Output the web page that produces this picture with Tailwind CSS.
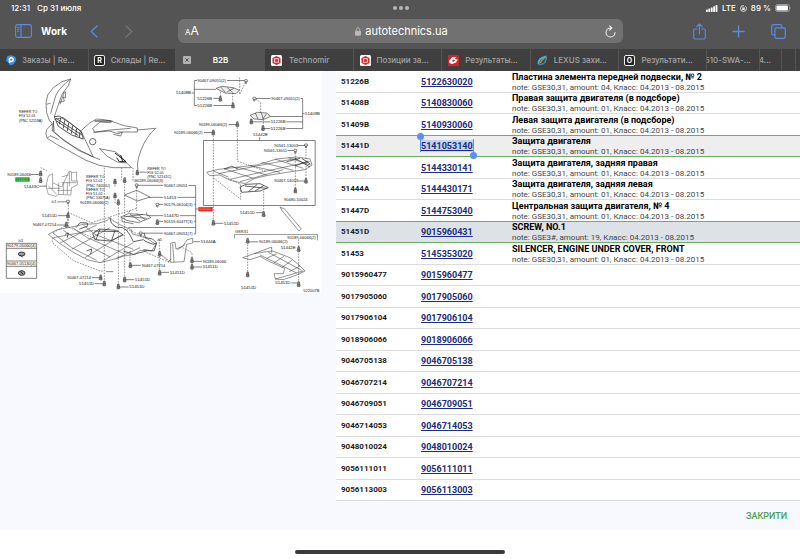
<!DOCTYPE html>
<html lang="ru">
<head>
    <meta charset="UTF-8">
    <meta name="viewport" content="width=device-width, initial-scale=1.0">
    <title>B2B</title>
    <script src="https://cdn.jsdelivr.net/npm/@tailwindcss/browser@4"></script>
</head>
<body class="min-h-screen flex flex-col bg-white font-['Roboto',sans-serif] text-[#212121] overflow-x-hidden">

    <!-- Browser chrome -->
    <header class="bg-[#545454] text-white font-['Inter',sans-serif]">
        <div class="grid grid-cols-3 items-center h-4 pl-[11px] pr-2 text-[8px] leading-4 font-medium">
            <div class="flex gap-[7px]"><span>12:31</span><span>Ср 31 июля</span></div>
            <div class="flex justify-center gap-[2px]">
                <i class="size-1 rounded-full bg-[#b5b5b5]"></i>
                <i class="size-1 rounded-full bg-[#b5b5b5]"></i>
                <i class="size-1 rounded-full bg-[#b5b5b5]"></i>
            </div>
            <div class="flex justify-end items-center gap-[4px]">
                <svg class="w-3 h-[7px]" viewBox="0 0 12 7" fill="#fff"><rect y="4.5" width="1.8" height="2.5" rx=".4"/><rect x="2.4" y="3.5" width="1.8" height="3.5" rx=".4"/><rect x="4.8" y="2.5" width="1.8" height="4.5" rx=".4"/><rect x="7.2" y="1.3" width="1.8" height="5.7" rx=".4"/><rect x="9.6" width="1.8" height="7" rx=".4"/></svg>
                <span>LTE</span>
                <svg class="size-[7px]" viewBox="0 0 8 8" fill="none" stroke="#fff" stroke-width=".9"><circle cx="4" cy="4" r="3.4" stroke-dasharray="16 2"/><rect x="2.6" y="3.7" width="2.8" height="2" fill="#fff" stroke="none"/><path d="M3.1 3.8V3a.9.9 0 0 1 1.8 0v.8" stroke-width=".6"/></svg>
                <span>89 %</span>
                <svg class="w-[17px] h-2" viewBox="0 0 17 8"><rect x=".5" y=".5" width="14" height="7" rx="2" fill="none" stroke="#aaa" stroke-width=".8"/><rect x="1.4" y="1.4" width="11.6" height="5.2" rx="1.2" fill="#fff"/><path d="M15.5 2.8q1 1.2 0 2.4z" fill="#aaa"/></svg>
            </div>
        </div>

        <div class="flex items-center h-[33px] pl-[15px] pr-[14px] pb-[3px]">
            <div class="flex items-center w-[163px]">
                <button aria-label="Sidebar"><svg class="w-[17px] h-[14px] block" viewBox="0 0 17 14" fill="none" stroke="#5a8ae6" stroke-width="1.1"><rect x=".6" y=".6" width="15.8" height="12.8" rx="1.8"/><path d="M6 .6v12.8M2 3.2h2.4M2 5.2h2.4M2 7.2h2.4"/></svg></button>
                <button class="ml-[9px] text-[10px] font-bold w-[25px] text-left">Work</button>
                <button class="ml-[24px]" aria-label="Back"><svg class="w-2 h-[13px] block" viewBox="0 0 8 13" fill="none" stroke="#5a8ae6" stroke-width="1.3" stroke-linecap="round" stroke-linejoin="round"><path d="M7 1 1.2 6.5 7 12"/></svg></button>
                <button class="ml-[27px]" aria-label="Forward"><svg class="w-2 h-[13px] block" viewBox="0 0 8 13" fill="none" stroke="#757575" stroke-width="1.3" stroke-linecap="round" stroke-linejoin="round"><path d="m1 1 5.8 5.5L1 12"/></svg></button>
            </div>
            <div class="flex-1 flex items-center h-6 rounded-[6px] bg-[#717171] px-[7px]">
                <button class="flex items-baseline w-5 leading-4" aria-label="Text size"><span class="text-[8px]">A</span><span class="text-[12px]">A</span></button>
                <div class="flex-1 flex items-center justify-center gap-1">
                    <svg class="w-[6px] h-[9px]" viewBox="0 0 6 9"><rect y="3.8" width="6" height="5" rx="1" fill="#b9b9b9"/><path d="M1.2 4V2.5a1.8 1.8 0 0 1 3.6 0V4" fill="none" stroke="#b9b9b9" stroke-width=".9"/></svg>
                    <input type="text" aria-label="Address" value="autotechnics.ua" class="field-sizing-content text-[11px] leading-4 bg-transparent outline-none">
                </div>
                <button class="w-[18px] flex justify-end" aria-label="Reload"><svg class="w-[11px] h-[13px]" viewBox="0 0 11 13" fill="none" stroke="#eee" stroke-width="1.1" stroke-linecap="round" stroke-linejoin="round"><path d="M5.5 3a4.5 4.5 0 1 0 4.5 4.5M4.6 .8 6.8 3 4.6 5.2"/></svg></button>
            </div>
            <div class="flex items-center justify-end gap-[26px] w-[163px]">
                <button aria-label="Share"><svg class="w-[13px] h-[17px] block" viewBox="0 0 13 17" fill="none" stroke="#5a8ae6" stroke-width="1.1" stroke-linecap="round" stroke-linejoin="round"><path d="M4.3 6H2Q.7 6 .7 7.3v7.4Q.7 16 2 16h9q1.3 0 1.3-1.3V7.3Q12.3 6 11 6H8.7M6.5 11V1M3.7 3.6 6.5.8l2.8 2.8"/></svg></button>
                <button aria-label="New tab"><svg class="size-[13px] block" viewBox="0 0 13 13" stroke="#5a8ae6" stroke-width="1.4" stroke-linecap="round"><path d="M6.5 1v11M1 6.5h11"/></svg></button>
                <button aria-label="Tabs"><svg class="size-[15px] block" viewBox="0 0 15 15" fill="none" stroke="#5a8ae6" stroke-width="1.2"><path d="M3.8 10.8H2.3Q.7 10.8.7 9.2v-7Q.7.7 2.2.7h7q1.6 0 1.6 1.5v1.6"/><rect x="3.9" y="3.9" width="10.4" height="10.4" rx="1.6"/></svg></button>
            </div>
        </div>

        <nav class="flex h-[22px] bg-[#3f3f3f] text-[8px] leading-[22px] font-medium text-[#a5a5a5] whitespace-nowrap">
            <a href="#" class="flex-1 min-w-0 flex items-center gap-[6px] pl-[6px] border-r border-[#555]">
                <svg class="size-[10px] shrink-0" viewBox="0 0 10 10"><path d="M1 1.5Q5-.8 8.5 1.5T8.5 8 3.5 9.5L2.5 7.5 0 6Z" fill="#3d8fda"/><path d="M3.5 8V5.2A1.9 1.9 0 1 1 5.5 6.5H4" fill="none" stroke="#fff" stroke-width="1.5"/></svg>
                <span>Заказы | Re...</span>
            </a>
            <a href="#" class="flex-1 min-w-0 flex items-center gap-[6px] pl-[5px] border-r border-[#555]">
                <svg class="size-[11px] shrink-0" viewBox="0 0 11 11"><rect x=".5" y=".5" width="10" height="10" rx="1.5" fill="#222" stroke="#eee"/><text x="5.5" y="8" text-anchor="middle" font-size="7" font-weight="700" fill="#fff">R</text></svg>
                <span>Склады | Re...</span>
            </a>
            <a href="#" class="flex-1 min-w-0 flex items-center pl-[7px] bg-[#545454] text-white font-semibold">
                <svg class="size-2 shrink-0" viewBox="0 0 8 8"><rect width="8" height="8" rx="1" fill="#b5b5b5"/><path d="m2.3 2.3 3.4 3.4m0-3.4L2.3 5.7" stroke="#444" stroke-width=".9"/></svg>
                <span class="flex-1 text-center pr-[15px]">B2B</span>
            </a>
            <a href="#" class="flex-1 min-w-0 flex items-center gap-[7px] pl-[6px] border-r border-[#555]">
                <svg class="size-[11px] shrink-0" viewBox="0 0 11 11"><rect width="11" height="11" rx="1.5" fill="#fff"/><path d="m5.5 1 4 2v5l-4 2-4-2V3z" fill="#d92828"/><rect x="3.5" y="3.8" width="4" height="3.4" fill="none" stroke="#fff" stroke-width=".8"/></svg>
                <span>Technomir</span>
            </a>
            <a href="#" class="flex-1 min-w-0 flex items-center gap-[6px] pl-[6px] border-r border-[#555]">
                <svg class="size-[11px] shrink-0" viewBox="0 0 11 11"><rect width="11" height="11" rx="1.5" fill="#fff"/><path d="m5.5 1 4 2v5l-4 2-4-2V3z" fill="#d92828"/><rect x="3.5" y="3.8" width="4" height="3.4" fill="none" stroke="#fff" stroke-width=".8"/></svg>
                <span>Позиции за...</span>
            </a>
            <a href="#" class="flex-1 min-w-0 flex items-center gap-[6px] pl-[6px] border-r border-[#555]">
                <svg class="size-[11px] shrink-0" viewBox="0 0 11 11"><rect width="11" height="11" fill="#cf2430"/><path d="M1 6 4 2.2 8.5 2 6.5 4 10 4.5 8 7.5 4 9 1.5 8z" fill="#fff"/><path d="M4 6.5 5 4.5 7 5 6 6.8z" fill="#cf2430"/></svg>
                <span>Результаты...</span>
            </a>
            <a href="#" class="flex-1 min-w-0 flex items-center gap-[6px] pl-[6px] border-r border-[#555]">
                <svg class="size-[11px] shrink-0" viewBox="0 0 11 11" fill="none"><path d="M1.5 9Q1 3 9.5 1.5" stroke="#47b5d4" stroke-width="1.8"/><path d="M1.5 9.5Q5 10 8 7.5L9.500 2" stroke="#418bb8" stroke-width="1.500"/><path d="M3.500 8Q4 5 7.500 3.500" stroke="#d68a3c" stroke-width="1.200"/></svg>
                <span>LEXUS захи...</span>
            </a>
            <a href="#" class="flex-1 min-w-0 flex items-center gap-[6px] pl-[5px] border-r border-[#555]">
                <svg class="size-[11px] shrink-0" viewBox="0 0 11 11"><rect x=".5" y=".5" width="10" height="10" rx="1.5" fill="#222" stroke="#eee"/><text x="5.5" y="8" text-anchor="middle" font-size="7" font-weight="700" fill="#fff">O</text></svg>
                <span>Результати...</span>
            </a>
            <a href="#" class="w-[53px] flex justify-end overflow-hidden pr-[8px] border-r border-[#555]"><span>510-SWA-...</span></a>
            <a href="#" class="w-[22px] flex justify-end overflow-hidden pr-[10px] border-r border-[#555]"><span>4...</span></a>
            <a href="#" class="w-[14px] border-r border-[#555]" aria-label="Tab"></a>
            <a href="#" class="w-[4px]" aria-label="Tab"></a>
        </nav>
    </header>

    <main class="bg-[#f8f8ff]">
        <div class="flex items-start">
            <!-- Exploded view -->
            <section class="w-[42%] pr-[14px]">
                <svg class="w-full h-auto block bg-white" viewBox="0 0 966 666" font-family="'Liberation Sans',sans-serif" font-size="12" fill="#111" stroke-linejoin="round">
                    <defs>
                        <g id="bolt"><path d="M-2-8h4l2 9h-8z" fill="#888" stroke="#333" stroke-width="1.500"/><ellipse cy="4" rx="5" ry="3" fill="#888" stroke="#333" stroke-width="1.500"/></g>
                        <g id="nut"><ellipse rx="5" ry="3.500" fill="#eee" stroke="#222" stroke-width="1.600"/><path d="M-2 3v5h4V3" fill="none" stroke="#222" stroke-width="1.500"/></g>
                    </defs>

                    <!-- bumper -->
                    <g fill="none" stroke="#333" stroke-width="1.800">
                        <path d="M212 24 186 32 160 50 143 72 138 96 140 125 148 148 157 158 140 176Q134 188 142 202L170 220 222 248 258 268Q300 288 340 290H395L380 276M212 24 205 44 187 68 172 110 163 137M212 24Q180 48 168 72L157 108 152 128M189 66 196 62 197 80 190 78 193 90 178 94M192 66 180 100M140 100 152 96"/>
                        <path d="M240 182 270 155 290 144 312 146 338 151 330 155 300 153 278 172 284 184 330 180 352 188 367 184 362 195 340 190M338 152 372 164 412 171V183H352M280 184 320 178 392 172M412 177 467 172Q440 195 424 235T414 296"/>
                        <path d="M157 158V180L180 198 235 238 280 258M163 145 190 140 244 182 280 258 240 238 190 208 158 178M280 258 300 266M298 233 345 242 362 255 380 276 352 273 322 256ZM142 202 150 194 176 206"/>
                        <path d="M163 137 178 135 210 156 244 182 250 204 215 192 175 166ZM168 142 246 192M170 150 235 194M160 150 162 180M182 140 178 160M194 148 190 172M206 156 202 180M218 164 214 188M230 172 227 194M240 182 238 200" stroke="#333" stroke-width="2.500"/>
                        <path d="M345 246 378 272 358 272 350 260M362 252 368 272M284 150h50" stroke="#222" stroke-width="3"/>
                        <circle cx="278" cy="212" r="9.500" stroke-width="2.200"/>
                    </g>

                    <!-- under cover, front -->
                    <g fill="none" stroke="#444" stroke-width="1.700">
                        <path d="M145 490 172 476 225 466 250 460 292 458 322 448 330 440 338 448 362 462 394 476 396 488 440 502 468 520 455 540 420 538 405 550 372 555 340 565 300 575 262 566 222 545 180 518ZM158 485 215 530 290 568M190 478 240 510 330 558M218 470 262 500 372 548M250 462 285 490 400 535M180 516 290 462M215 535 330 470M255 560 368 490M305 572 400 515M350 562 420 530M160 500 280 478"/>
                        <path d="M278 488 298 474 350 478 370 492 330 510 285 506ZM282 480 355 482M300 474 288 506M345 478 335 508M330 440 334 456 348 468 368 470 380 478 390 492 400 512 430 506 438 512 460 520 470 516 462 540 430 536M370 540 400 550 440 540M228 470 240 455 262 456 262 466 238 474M260 540 275 534 272 550M195 490 205 486 202 500M432 486 436 500 458 504 470 516" stroke="#333" stroke-width="2.300"/>
                        <path d="M157 500V515L222 570 300 600H312M205 402V468L300 510M313 290V640M355 400V645M374 330V620M365 290V325M399 290V330H412M345 325V350M345 375V400M204 424 275 455 410 412M410 340V420M390 540V585M122 290 145 302M478 505V610M478 548 510 575M440 545 510 575M160 485 200 462 205 440M380 475 440 500" stroke-dasharray="5 3.500"/>
                    </g>

                    <!-- bracket 51443C -->
                    <path d="M145 315 158 308V335L185 348 208 300 214 302 215 330H232V342L215 350 212 372 175 370 168 376 145 370 138 345ZM176 335V370M190 335V370M202 335V370M172 358H214M185 335H230M208 302V345M145 345 170 370M158 335V355M142 352H180M185 318 205 312M215 305 230 303V330" fill="none" stroke="#666" stroke-width="1.700"/>

                    <!-- plates -->
                    <g fill="none" stroke="#333" stroke-width="1.800">
                        <path d="M373 372 410 358 450 378 412 390Z"/>
                        <path d="M362 438 385 428 445 432 452 440 415 455 380 448ZM378 436 440 442M390 430 420 450M410 428 436 446M370 438 430 430M366 440V452L400 458M385 425l5-6M440 430v-6" stroke-width="2.200" stroke="#555"/>
                    </g>

                    <!-- guards -->
                    <g fill="#eee" stroke="#444" stroke-width="2">
                        <path d="M648 52 665 46 700 50 718 58 708 68 675 66ZM662 48l14 16m6-14 16 14m4-12-20 10M750 133 772 124 800 126 812 136 790 146 762 144ZM766 126l8 18m10-18 6 18m10-16-12 16"/>
                    </g>

                    <!-- engine under cover 51442E -->
                    <g fill="none" stroke="#444" stroke-width="1.700">
                        <path d="M620 304 655 295 700 290 770 282 830 264 890 258 930 264 936 282 915 296 860 304 800 314 765 322 735 338 690 328 660 312 630 314ZM640 300 685 318M672 293 760 322M710 288 800 312M750 284 840 304M785 274 880 298M825 264 910 292M865 260 930 282M655 308 770 285 890 262M690 325 800 300 930 272M720 332 850 296"/>
                        <path d="M720 348 738 340 780 338 805 350 780 360 725 364ZM735 345 800 352M745 362 772 340M765 360 792 343M672 294 695 286 715 294M860 272 900 262M885 262 930 288M905 262 932 280M885 285 925 270" stroke="#333" stroke-width="2.300"/>
                        <path d="M640 185V455M712 160V270L800 302M640 320 722 385V340L680 320M886 245V355M918 225V330M791 360V425M719 20V70L738 30M768 85 782 95V125M662 62V84M698 66V104M790 145V168" stroke-dasharray="5 3.500"/>
                        <path d="M610.500 208.500H945.500V403.500H610.500Z" stroke="#222"/>
                        <path d="m843 410 10 3 51 61-7 6-51-61-6-11z"/>
                    </g>

                    <!-- lower right cover and bracket 51444A -->
                    <g fill="none" stroke="#444" stroke-width="1.700">
                        <path d="M728 560 762 548 800 542 818 540 870 560 895 580 915 600 890 612 850 626 826 624 822 608 850 608 854 592 805 570 780 556 750 566ZM780 552 890 606M805 544 905 598M800 562 830 548M822 575 852 556M845 590 876 568M868 602 900 585M826 624 910 600M762 548 815 528V545"/>
                        <path d="M512 516 525 514 528 534 548 526 562 506 578 502V516L560 520 552 572 512 574ZM518 518 522 574M532 536 556 520M505 572 512 565"/>
                        <path d="M743 512V610M896 505V640M548 530 576 545V600M480 548 512 573" stroke-dasharray="5 3.500"/>
                        <path d="M703.500 502V490.500H952.500V508" stroke="#555"/>
                    </g>

                    <!-- leader lines -->
                    <path fill="none" stroke="#333" stroke-width="1.800" d="M591 28.500H583V103.500H591M575 66H583M583 55H648M681 28.500H735M640 82H660M640 103.500H698M768 82.500H812M902 82.500H908V172.500M908 128H914M812 136.500H908M755 152.500H811M859 152.500H908M790 172.500H811M859 172.500H908M779 198V208M686 160.500H710M612 184.500H638M894 223.500H916M863 238.500H884M92 310.500H118M118 345.500H140M440 303.500H418M172 392.500H200M174 434H202M170 462H198M410 343H490M448 379H490M470 400H490M440 434H490M472 451H490M425 486.500H490M385 469.500H587M566 343.500H587V488.500H582M587 414H596M532 379H587M582 400H587M540 434H587M582 451H587M392 583H423M374 626H403M355 648H386M276 620H298M285 638H310M479 604H507M642 457H670M768 425H790M580 512H600M578 571H606M578 588H606M745 512.500H775M874 636H894M894 330H916M318 602H340"/>

                    <!-- fasteners -->
                    <g>
                        <use href="#bolt" x="122" y="308"/><use href="#bolt" x="122" y="328"/>
                        <use href="#nut" x="204" y="391"/><use href="#bolt" x="204" y="434"/><use href="#bolt" x="199" y="462"/>
                        <use href="#bolt" x="412" y="305"/><use href="#bolt" x="345" y="332"/><use href="#bolt" x="374" y="328"/><use href="#bolt" x="345" y="374"/><use href="#nut" x="410" y="342"/>
                        <use href="#bolt" x="355" y="394"/><use href="#nut" x="472" y="400"/><use href="#bolt" x="472" y="454"/><use href="#nut" x="422" y="486"/>
                        <use href="#bolt" x="391" y="583"/><use href="#bolt" x="374" y="626"/><use href="#bolt" x="355" y="647"/><use href="#bolt" x="302" y="620"/><use href="#bolt" x="313" y="638"/>
                        <use href="#bolt" x="479" y="549"/><use href="#bolt" x="479" y="606"/>
                        <use href="#nut" x="738" y="29"/><use href="#bolt" x="661" y="84"/><use href="#bolt" x="699" y="104"/><use href="#nut" x="763" y="82"/>
                        <use href="#bolt" x="754" y="152"/><use href="#bolt" x="789" y="172"/>
                        <use href="#bolt" x="712" y="160"/><use href="#bolt" x="640" y="185"/><use href="#nut" x="918" y="222"/><use href="#nut" x="886" y="238"/>
                        <use href="#bolt" x="918" y="330"/><use href="#bolt" x="886" y="359"/><use href="#bolt" x="791" y="430"/><use href="#bolt" x="640" y="456"/>
                        <use href="#bolt" x="576" y="568"/><use href="#bolt" x="576" y="588"/><use href="#bolt" x="743" y="510"/><use href="#bolt" x="743" y="611"/>
                        <use href="#bolt" x="896" y="535"/><use href="#bolt" x="896" y="640"/>
                    </g>

                    <!-- clip box -->
                    <path d="M19 517h91v105H19zM19 532h91M19 570h91M19 586h91" fill="none" stroke="#444" stroke-width="2"/>
                    <g fill="#999" stroke="#222" stroke-width="2.500"><ellipse cx="65" cy="549" rx="10" ry="6"/><ellipse cx="65" cy="606" rx="10" ry="7"/><path d="m60 553 8 5M60 601l9 8"/></g>

                    <!-- figure references -->
                    <g font-size="11">
                        <text x="57" y="126">REFER TO</text><text x="57" y="139">FIG 52-01</text><text x="57" y="152">(PNC 52119A)</text>
                        <text x="442" y="296">REFER TO</text><text x="442" y="308">FIG 52-01</text><text x="442" y="320">(PNC 52161C)</text>
                        <text x="258" y="322">REFER TO</text><text x="258" y="334">FIG 52-01</text><text x="258" y="347">(PNC 74051U)</text>
                        <text x="258" y="360">REFER TO</text><text x="258" y="372">FIG 51-02</text><text x="258" y="385">(PNC 53075A)</text>
                    </g>

                    <!-- standard parts -->
                    <text x="22" y="314">90189-06066</text><text x="154" y="396">※1</text><text x="54" y="512">※1</text><text x="470" y="509">※1</text>
                    <text x="98" y="466">90467-07214</text><text x="240" y="398">90189-06066(2)</text><text x="404" y="333">90189-06066(3)</text>
                    <text x="492" y="347">90467-09051</text><text x="492" y="404">90179-06104(3)</text><text x="492" y="455">90159-60477(3)</text><text x="492" y="491">90467-09051(7)</text>
                    <text x="21" y="529">90179-05060(4)</text><text x="21" y="583">90467-05130(4)</text>
                    <text x="425" y="587">90467-07214</text><text x="202" y="624">90467-07214</text>
                    <text x="592" y="32">90467-09051(2)</text><text x="814" y="86">90467-09051(2)</text>
                    <text x="596" y="164">90189-06066(2)</text><text x="522" y="188">90189-06066(2)</text>
                    <text x="823" y="227">90561-13003</text><text x="791" y="242">90561-13011</text><text x="823" y="334">90467-14053</text><text x="852" y="391">90480-10024</text>
                    <text x="608" y="575">90189-06066</text><text x="705" y="487">GSR31</text><text x="777" y="516">90189-06066(2)</text><text x="862" y="503">90189-06066(2)</text><text x="910" y="662">522007B</text>

                    <!-- catalogue parts -->
                    <g font-size="13">
                        <text x="72" y="350">51443C</text><text x="126" y="438">51451D</text><text x="492" y="383">51453</text><text x="492" y="438">51447D</text>
                        <text x="509" y="608">51451D</text><text x="405" y="630">51451D</text><text x="388" y="652">51451D</text><text x="237" y="642">51451D</text>
                        <text x="528" y="70">51408B</text><text x="592" y="86">51226B</text><text x="592" y="107">51226B</text>
                        <text x="915" y="132">51409B</text><text x="812" y="156">51226B</text><text x="812" y="176">51226B</text><text x="759" y="196">51442E</text>
                        <text x="720" y="429">51451D</text><text x="672" y="461">51451D</text><text x="602" y="516">51444A</text><text x="608" y="592">51451D</text>
                        <text x="842" y="534">51442E</text><text x="723" y="653">51451D</text><text x="826" y="640">51451D</text>
                    </g>
                    <rect x="46" y="319" width="43" height="13" fill="#159a15"/><text x="49" y="329" font-size="10" fill="#9ee09e">51441D</text>
                    <rect x="595" y="408" width="43" height="13" fill="#ee2a20"/><text x="598" y="418" font-size="10" fill="#ff9a92">51451D</text>
                </svg>
            </section>

            <!-- Parts list -->
            <section class="flex-1 bg-white">
                <table class="w-full table-fixed border-separate border-spacing-0">
                    <colgroup><col class="w-[85px]"><col class="w-[91px]"><col></colgroup>
                    <tbody id="parts"></tbody>
                </table>
            </section>
        </div>
        <div class="flex justify-end items-center h-[29px] pr-[13px]">
            <button class="text-[9px] leading-4 font-medium text-[#4c9f4a]">ЗАКРИТИ</button>
        </div>
    </main>

    <footer class="flex-1 flex justify-center items-end pb-[5px]">
        <div class="w-[210px] h-1 rounded-full bg-[#3a3a3c]"></div>
    </footer>

    <script>
        const gray = 'border-[#dcdcdc]';
        const green = 'border-[#6fac66]';

        // code, number, name, note, background, bottom line
        const parts = [
            ['51226B', '5122630020', 'Пластина элемента передней подвески, № 2', 'GSE30,31, amount: 04', '', gray],
            ['51408B', '5140830060', 'Правая защита двигателя (в подсборе)', 'GSE30,31, amount: 01', '', gray],
            ['51409B', '5140930060', 'Левая защита двигателя (в подсборе)', 'GSE30,31, amount: 01', '', green],
            ['51441D', '5141053140', 'Защита двигателя', 'GSE30,31, amount: 01', 'bg-[#eeeeee]', green, true],
            ['51443C', '5144330141', 'Защита двигателя, задняя правая', 'GSE30,31, amount: 01', '', gray],
            ['51444A', '5144430171', 'Защита двигателя, задняя левая', 'GSE30,31, amount: 01', '', gray],
            ['51447D', '5144753040', 'Центральная защита двигателя, № 4', 'GSE30,31, amount: 01', '', green],
            ['51451D', '9015960431', 'SCREW, NO.1', 'GSE3#, amount: 19', 'bg-[#dce2e6]', green],
            ['51453', '5145353020', 'SILENCER, ENGINE UNDER COVER, FRONT', 'GSE30,31, amount: 01', '', gray]
        ];
        ['9015960477', '9017905060', '9017906104', '9018906066', '9046705138', '9046707214',
         '9046709051', '9046714053', '9048010024', '9056111011', '9056113003'
        ].forEach(n => parts.push([n, n, '', '', '', gray]));

        const handles = `
            <i class="absolute -left-px -top-px w-px h-[13px] bg-[#5b8ff0]"></i>
            <i class="absolute -right-px -top-px w-px h-[13px] bg-[#5b8ff0]"></i>
            <i class="absolute -left-1 -top-[7px] size-[7px] rounded-full bg-[#5b8ff0]"></i>
            <i class="absolute -right-1 -bottom-[7px] size-[7px] rounded-full bg-[#5b8ff0]"></i>`;

        document.getElementById('parts').innerHTML = parts.map(([code, number, name, note, bg, line, selected]) => `
            <tr class="odd:h-[22px] even:h-[21px] ${bg}">
                <td class="p-0 pl-[5px] border-b ${line} text-[8px] leading-3 font-bold">${code}</td>
                <td class="p-0 border-b ${line} text-[9px] leading-3 font-bold text-[#1d2c7c]">
                    <span class="relative inline-block ${selected ? 'bg-[#bfd3f5]' : ''}"><a href="#" class="underline">${number}</a>${selected ? handles : ''}</span>
                </td>
                <td class="p-0 border-b ${line} whitespace-nowrap">
                    ${name ? `<div class="text-[9px] leading-[11px] font-bold text-black">${name}</div>
                    <div class="text-[8px] leading-[9px] text-[#444]">note: ${note}, Класс: 04.2013 - 08.2015</div>` : ''}
                </td>
            </tr>`).join('');
    </script>
</body>
</html>
